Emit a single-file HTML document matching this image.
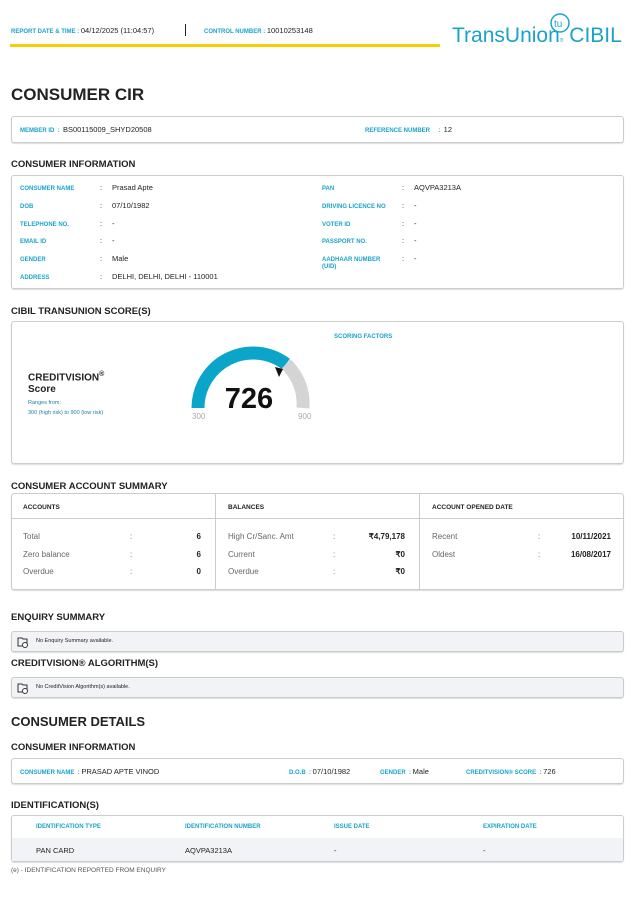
<!DOCTYPE html><html><head><style>
*{margin:0;padding:0;box-sizing:border-box}
body{width:640px;height:917px;background:#fff;font-family:"Liberation Sans",sans-serif;color:#222;position:relative;overflow:hidden}
.a{position:absolute;white-space:nowrap;line-height:1.2;font-size:7px}
.lb{color:#1aa3c9;font-size:6px;font-weight:bold}
.v{font-size:7.5px;color:#222}
.h1{font-size:17px;font-weight:bold;color:#222}
.h2{font-size:9.5px;font-weight:bold;color:#222}
.box{position:absolute;border:1px solid #ccc;border-radius:3px;box-shadow:0 1px 1px #ddd}
.g{color:#666;font-size:8px}
.gb{font-size:8px;font-weight:bold;color:#222}
</style></head><body>
<div class="a" style="left:11px;top:26px"><span class="lb">REPORT DATE &amp; TIME : </span><span class="v">04/12/2025 (11:04:57)</span></div>
<div class="a" style="left:185px;top:24px;width:1px;height:12px;background:#222"></div>
<div class="a" style="left:204px;top:26px"><span class="lb">CONTROL NUMBER : </span><span class="v">10010253148</span></div>
<div class="a" style="left:10px;top:44px;width:430px;height:3px;background:#f5cf00"></div>
<div class="a" style="left:452px;top:23px;font-size:21px;color:#1aa3c9;letter-spacing:0">TransUnion<span style="font-size:5px">®</span> CIBIL</div>
<svg class="a" style="left:549px;top:12px" width="22" height="22"><circle cx="11" cy="11" r="9" fill="none" stroke="#1aa3c9" stroke-width="1.5"/><text x="5" y="15" font-size="10" fill="#1aa3c9" font-family="Liberation Sans">tu</text></svg>
<div class="a h1" style="left:11px;top:85px">CONSUMER CIR</div>
<div class="box" style="left:11px;top:116px;width:613px;height:27px"></div>
<div class="a" style="left:20px;top:125px"><span class="lb">MEMBER ID &nbsp;: &nbsp;</span><span class="v">BS00115009_SHYD20508</span></div>
<div class="a" style="left:365px;top:125px"><span class="lb">REFERENCE NUMBER &nbsp;&nbsp;&nbsp;&nbsp;: &nbsp;</span><span class="v">12</span></div>
<div class="a h2" style="left:11px;top:159px">CONSUMER INFORMATION</div>
<div class="box" style="left:11px;top:175px;width:613px;height:114px"></div>
<div class="a lb" style="left:20px;top:181px;line-height:17.8px">CONSUMER NAME<br>DOB<br>TELEPHONE NO.<br>EMAIL ID<br>GENDER<br>ADDRESS</div>
<div class="a v" style="left:100px;top:179px;line-height:17.8px">:<br>:<br>:<br>:<br>:<br>:</div>
<div class="a v" style="left:112px;top:179px;line-height:17.8px">Prasad Apte<br>07/10/1982<br>-<br>-<br>Male<br>DELHI, DELHI, DELHI - 110001</div>
<div class="a lb" style="left:322px;top:181px;line-height:17.8px">PAN<br>DRIVING LICENCE NO<br>VOTER ID<br>PASSPORT NO.<br>AADHAAR NUMBER</div>
<div class="a lb" style="left:322px;top:264px">(UID)</div>
<div class="a v" style="left:402px;top:179px;line-height:17.8px">:<br>:<br>:<br>:<br>:</div>
<div class="a v" style="left:414px;top:179px;line-height:17.8px">AQVPA3213A<br>-<br>-<br>-<br>-</div>
<div class="a h2" style="left:11px;top:306px">CIBIL TRANSUNION SCORE(S)</div>
<div class="box" style="left:11px;top:321px;width:613px;height:143px"></div>
<div class="a lb" style="left:334px;top:334px">SCORING FACTORS</div>
<div class="a" style="left:28px;top:369px;font-size:10px;font-weight:bold;line-height:12px">CREDITVISION<sup style="font-size:7px">®</sup><br>Score</div>
<div class="a" style="left:28px;top:398px;font-size:5.5px;color:#1a7fa6;line-height:10px">Ranges from:<br>300 (high risk) to 900 (low risk)</div>
<svg class="a" style="left:180px;top:340px" width="140" height="80">
<path d="M18 68 A55 55 0 0 1 106 24" fill="none" stroke="#0aa5c8" stroke-width="13"/>
<path d="M106 24 A55 55 0 0 1 123 68" fill="none" stroke="#d4d4d4" stroke-width="13"/>
<polygon points="95,27 103,29 99,37" fill="#111"/>
<text x="69" y="68" text-anchor="middle" font-size="29" font-weight="bold" font-family="Liberation Sans" fill="#111">726</text>
<text x="12" y="79" font-size="8" fill="#aaa" font-family="Liberation Sans">300</text>
<text x="118" y="79" font-size="8" fill="#aaa" font-family="Liberation Sans">900</text>
</svg>
<div class="a h2" style="left:11px;top:481px">CONSUMER ACCOUNT SUMMARY</div>
<div class="box" style="left:11px;top:493px;width:613px;height:97px"></div>
<div class="a" style="left:11px;top:518px;width:613px;height:1px;background:#ccc"></div>
<div class="a" style="left:215px;top:493px;width:1px;height:97px;background:#ccc"></div>
<div class="a" style="left:419px;top:493px;width:1px;height:97px;background:#ccc"></div>
<div class="a" style="left:23px;top:504px;font-size:6.5px;font-weight:bold">ACCOUNTS</div>
<div class="a" style="left:228px;top:504px;font-size:6.5px;font-weight:bold">BALANCES</div>
<div class="a" style="left:432px;top:504px;font-size:6.5px;font-weight:bold">ACCOUNT OPENED DATE</div>
<div class="a g" style="left:23px;top:528px;line-height:17.5px">Total<br>Zero balance<br>Overdue</div>
<div class="a g" style="left:130px;top:528px;line-height:17.5px">:<br>:<br>:</div>
<div class="a gb" style="left:180px;top:528px;line-height:17.5px;width:21px;text-align:right">6<br>6<br>0</div>
<div class="a g" style="left:228px;top:528px;line-height:17.5px">High Cr/Sanc. Amt<br>Current<br>Overdue</div>
<div class="a g" style="left:333px;top:528px;line-height:17.5px">:<br>:<br>:</div>
<div class="a gb" style="left:350px;top:528px;line-height:17.5px;width:55px;text-align:right">₹4,79,178<br>₹0<br>₹0</div>
<div class="a g" style="left:432px;top:528px;line-height:17.5px">Recent<br>Oldest</div>
<div class="a g" style="left:538px;top:528px;line-height:17.5px">:<br>:</div>
<div class="a gb" style="left:550px;top:528px;line-height:17.5px;width:61px;text-align:right">10/11/2021<br>16/08/2017</div>
<div class="a h2" style="left:11px;top:612px">ENQUIRY SUMMARY</div>
<div class="box" style="left:11px;top:631px;width:613px;height:21px;background:#f2f3f6"></div>
<div class="a" style="left:36px;top:638px;font-size:5.5px">No Enquiry Summary available.</div>
<div class="a h2" style="left:11px;top:658px">CREDITVISION® ALGORITHM(S)</div>
<div class="box" style="left:11px;top:677px;width:613px;height:21px;background:#f2f3f6"></div>
<div class="a" style="left:36px;top:684px;font-size:5.5px">No CreditVision Algorithm(s) available.</div>
<svg class="a" style="left:17px;top:636px" width="12" height="12"><path d="M1 2h4l1 1h4v7H1z" fill="none" stroke="#333"/><circle cx="8" cy="9" r="2.5" fill="#fff" stroke="#333"/></svg>
<svg class="a" style="left:17px;top:682px" width="12" height="12"><path d="M1 2h4l1 1h4v7H1z" fill="none" stroke="#333"/><circle cx="8" cy="9" r="2.5" fill="#fff" stroke="#333"/></svg>
<div class="a" style="left:11px;top:714px;font-size:13px;font-weight:bold">CONSUMER DETAILS</div>
<div class="a h2" style="left:11px;top:742px">CONSUMER INFORMATION</div>
<div class="box" style="left:11px;top:758px;width:613px;height:26px"></div>
<div class="a" style="left:20px;top:767px"><span class="lb">CONSUMER NAME &nbsp;: </span><span class="v">PRASAD APTE VINOD</span></div>
<div class="a" style="left:289px;top:767px"><span class="lb">D.O.B &nbsp;: </span><span class="v">07/10/1982</span></div>
<div class="a" style="left:380px;top:767px"><span class="lb">GENDER &nbsp;: </span><span class="v">Male</span></div>
<div class="a" style="left:466px;top:767px"><span class="lb">CREDITVISION® SCORE &nbsp;: </span><span class="v">726</span></div>
<div class="a h2" style="left:11px;top:800px">IDENTIFICATION(S)</div>
<div class="box" style="left:11px;top:815px;width:613px;height:47px"></div>
<div class="a" style="left:12px;top:838px;width:611px;height:23px;background:#f2f3f6"></div>
<div class="a lb" style="left:36px;top:824px">IDENTIFICATION TYPE</div>
<div class="a lb" style="left:185px;top:824px">IDENTIFICATION NUMBER</div>
<div class="a lb" style="left:334px;top:824px">ISSUE DATE</div>
<div class="a lb" style="left:483px;top:824px">EXPIRATION DATE</div>
<div class="a v" style="left:36px;top:846px">PAN CARD</div>
<div class="a v" style="left:185px;top:846px">AQVPA3213A</div>
<div class="a v" style="left:334px;top:846px">-</div>
<div class="a v" style="left:483px;top:846px">-</div>
<div class="a" style="left:11px;top:867px;font-size:6.5px;color:#555">(e) - IDENTIFICATION REPORTED FROM ENQUIRY</div>
</body></html>
